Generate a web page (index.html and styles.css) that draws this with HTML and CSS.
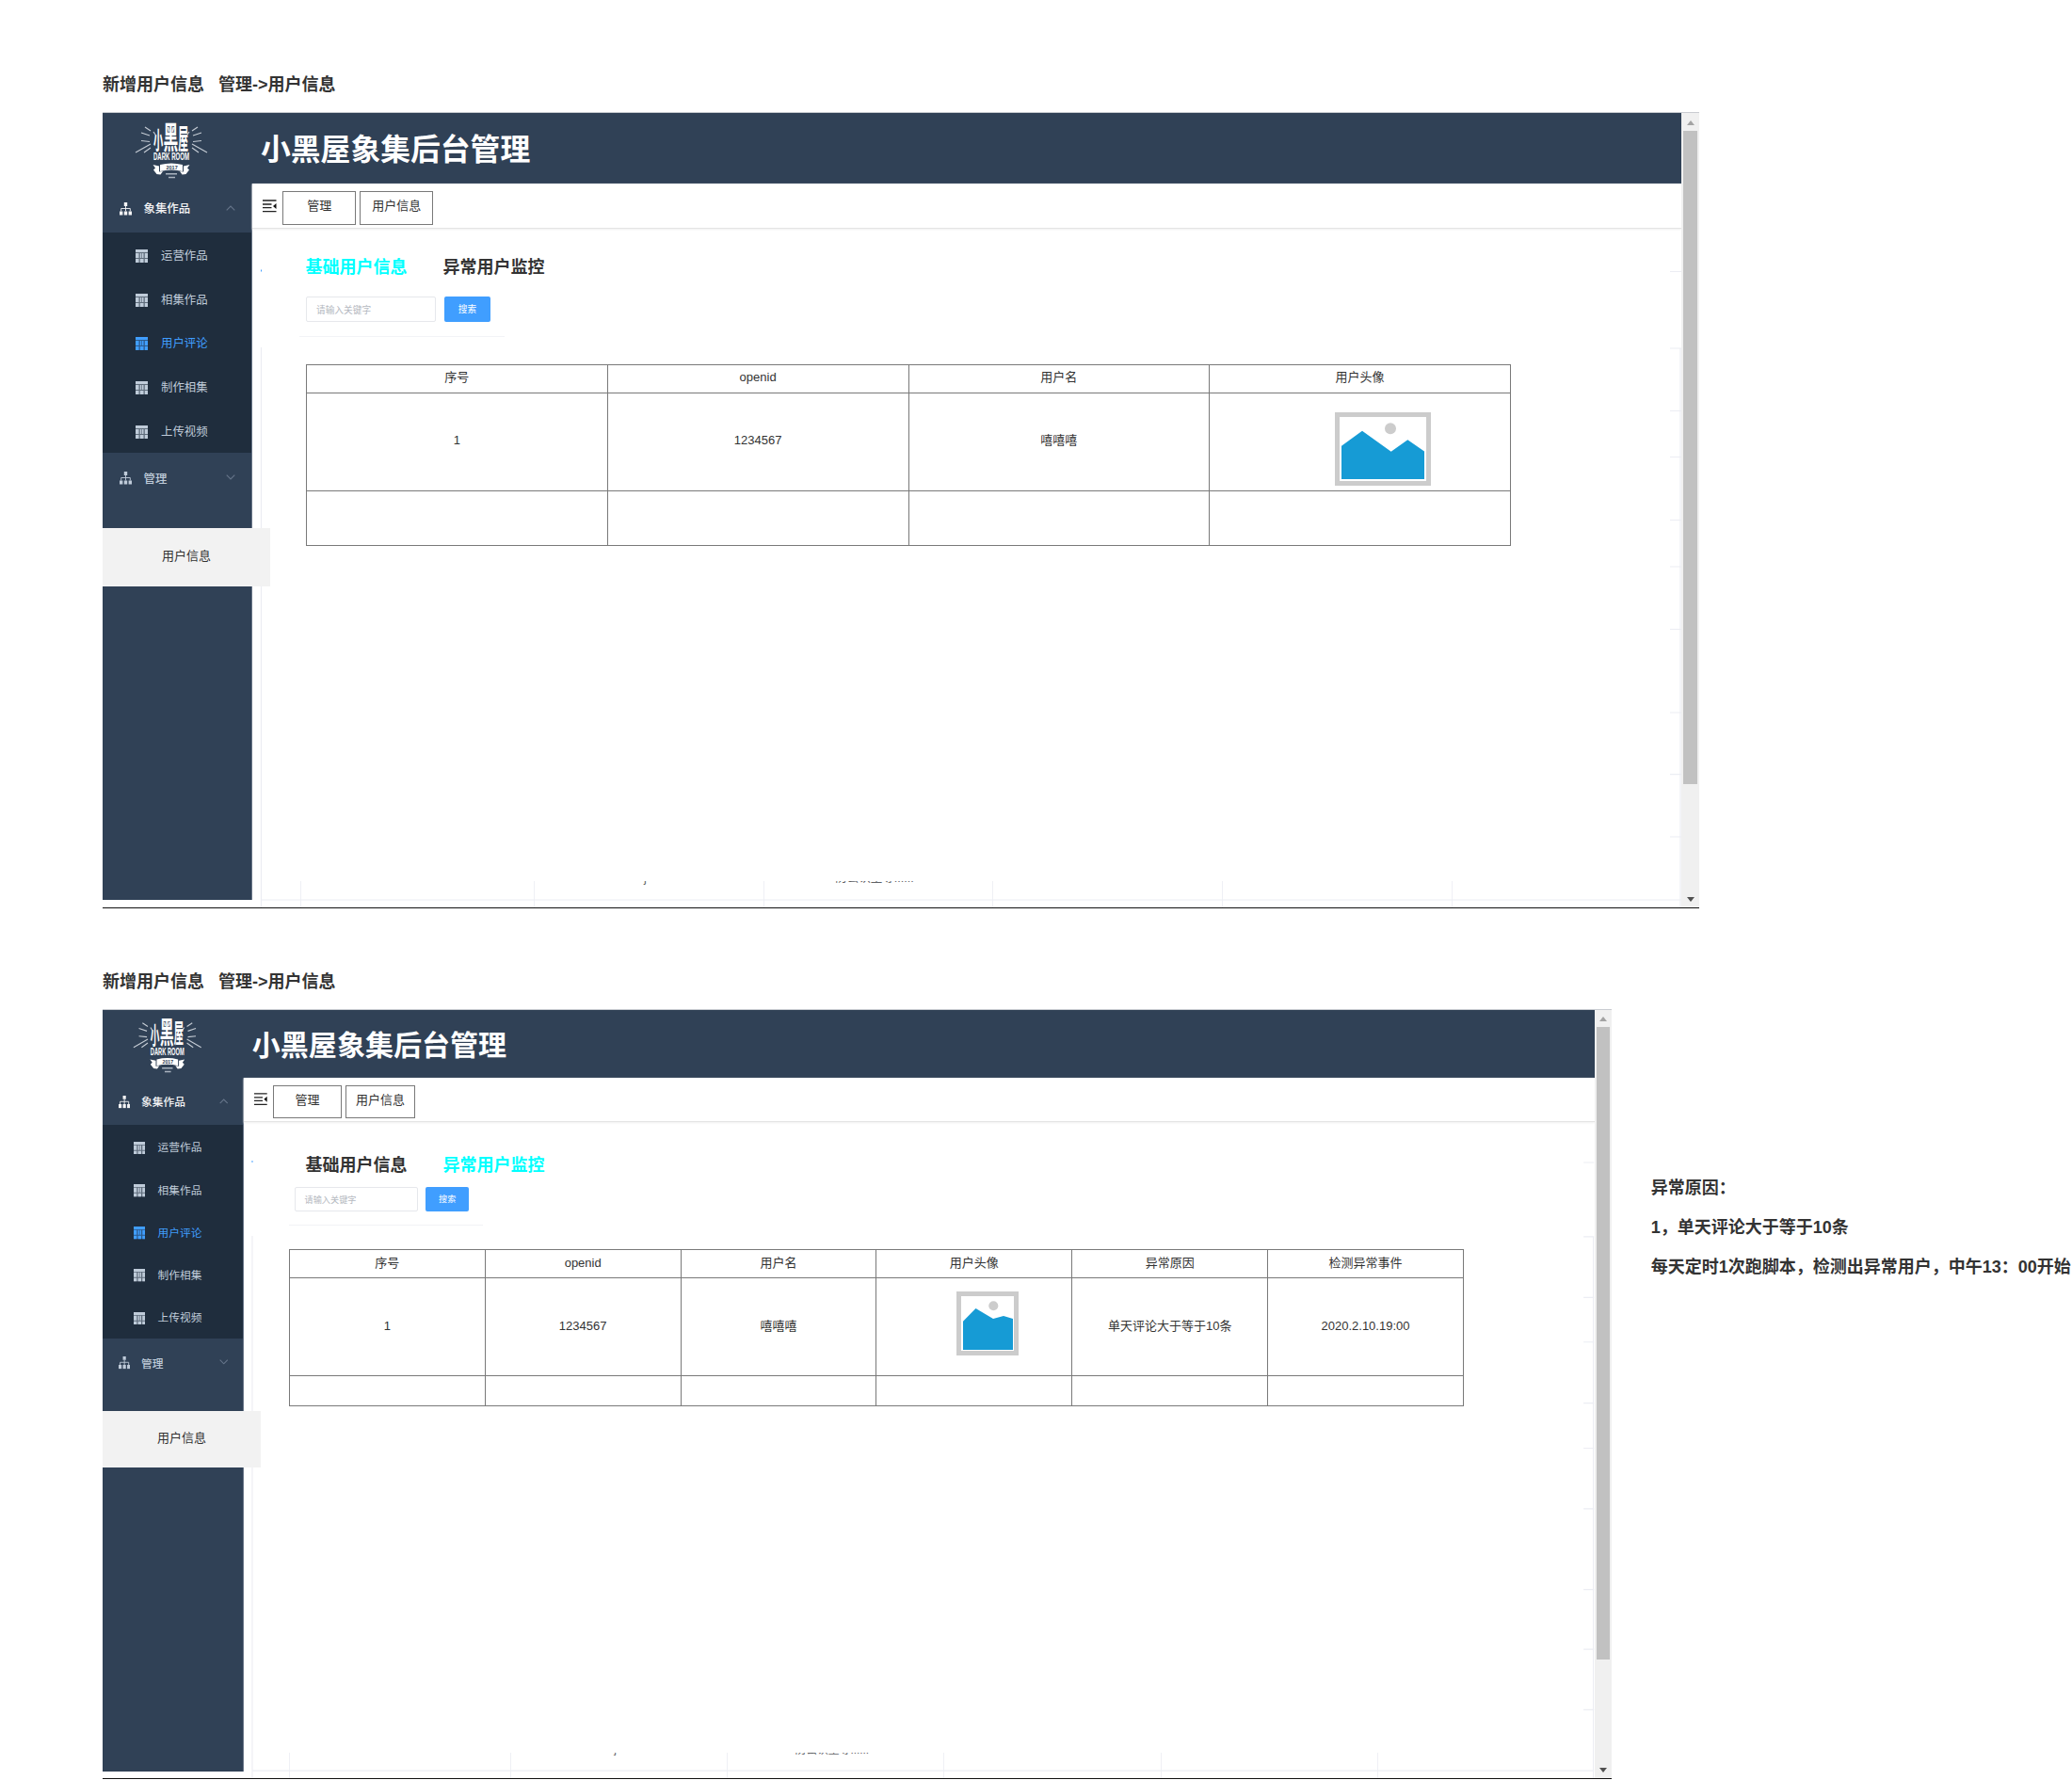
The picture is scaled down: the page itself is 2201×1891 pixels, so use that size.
FILE: index.html
```html
<!DOCTYPE html>
<html lang="zh-CN">
<head>
<meta charset="utf-8">
<title>小黑屋象集后台管理</title>
<link rel="stylesheet" href="styles.css">
</head>
<body>
<svg class="defs" aria-hidden="true">
  <symbol id="logo" viewBox="0 0 80 66" preserveAspectRatio="none">
    <g stroke="#c3cad3" stroke-width="1.2" fill="none">
      <path d="M2 37 18 28M11 37 18 32M8 24.500l9 1M8 16l9 3M12 10l6 4M21 15l2 3M78 37 62 28M69 37 62 32M72 24.500l-9 1M72 16l-9 3M68 10l-6 4M59 15l-2 3"/>
    </g>
    <g fill="#fff" font-family="'Noto Sans CJK SC',sans-serif" font-weight="700">
      <text transform="translate(21 33) scale(.6 1.5)" font-size="17">小</text>
      <text transform="translate(31.500 32.500) scale(.83 1.75)" font-size="19">黑</text>
      <text transform="translate(47.300 32.500) scale(.6 1.65)" font-size="18">屋</text>
      <text x="21" y="45.300" font-size="10.500" textLength="38" lengthAdjust="spacingAndGlyphs" font-family="'Liberation Sans',sans-serif">DARK ROOM</text>
    </g>
    <path fill="#fff" d="M28 50q12-3 24 0v7q-12-3-24 0zM20.500 50l6.500 1.500v6l4-.5-2.500 3.500-4-.5-3.500-4.500 2-2zM59.500 50l-6.500 1.500v6l-4-.5 2.500 3.500 4-.5 3.500-4.500-2-2z"/>
    <text x="34.500" y="55" font-size="5.500" font-weight="700" fill="#304156" font-family="'Liberation Sans',sans-serif">2017</text>
    <path stroke="#aab4c0" stroke-width="1.600" d="M34 59.700h12M37 63.500h7"/>
  </symbol>
  <symbol id="tree" viewBox="0 0 13 14" preserveAspectRatio="none">
    <path fill="currentColor" d="M4.800 0h3.400v4H4.800zM0 9.400h3.400v4.200H0zM4.800 9.400h3.400v4.200H4.800zM9.600 9.400H13v4.200H9.600z"/>
    <path fill="none" stroke="currentColor" stroke-width=".9" d="M6.500 4v5.400M1.700 9.400V6.500h9.600v2.900"/>
  </symbol>
  <symbol id="grid" viewBox="0 0 13 14" preserveAspectRatio="none">
    <path fill="currentColor" d="M0 0h13v3H0zM0 4h3.500v5H0zM4.800 4h1.500v5H4.800zM7 4h1.500v5H7zM9.800 4H13v5H9.800zM0 10h3.500v4H0zM4.800 10h3.700v4H4.800zM9.800 10H13v4H9.800z"/>
    <path fill="currentColor" opacity=".4" d="M0 2h13v12H0z"/>
  </symbol>
  <symbol id="up" viewBox="0 0 10 6"><path d="M.7 5.300 5 1l4.300 4.300" fill="none" stroke="#66758a" stroke-width="1.100"/></symbol>
  <symbol id="down" viewBox="0 0 10 6"><path d="M.7.700 5 5 9.300.700" fill="none" stroke="#66758a" stroke-width="1.100"/></symbol>
  <symbol id="fold" viewBox="0 0 15 14" preserveAspectRatio="none">
    <path stroke="#222" stroke-width="1.300" d="M0 1h14.500M0 5h9.500M0 8.600h9.500M0 12.700h14.500"/><path fill="#111" d="M14.500 4v6l-3.500-3z"/>
  </symbol>
  <symbol id="rules" viewBox="268 243 1518 721" preserveAspectRatio="none">
    <path fill="none" stroke="#ecedf3" stroke-width="1.200" d="M277.500 369v595M1785 370v594M1774 288.500h12M1774 370h12M1774 436.500h12M1774 485.500h12M1774 552.500h12M1774 602h12M1774 668.500h12M1774 757h12M1774 822.700h12M1774 889h12M277 956h1509"/>
    <path fill="#409eff" d="M277 286.500h1v2h-1z"/>
  </symbol>
</svg>

<section class="board board--basic">
  <h2 class="board__title">新增用户信息&nbsp;&nbsp; 管理-&gt;用户信息</h2>
  <div class="board__row">
    <div class="shell">
      <div class="view">
        <header class="head"><svg class="head__logo"><use href="#logo"/></svg><h1 class="head__name">小黑屋象集后台管理</h1></header>
        <div class="body">
          <nav class="side">
            <div class="group group--open"><svg class="icon"><use href="#tree"/></svg><span>象集作品</span><svg class="chevron"><use href="#up"/></svg></div>
            <ul class="submenu">
              <li><svg class="icon"><use href="#grid"/></svg>运营作品</li>
              <li><svg class="icon"><use href="#grid"/></svg>相集作品</li>
              <li class="is-active"><svg class="icon"><use href="#grid"/></svg>用户评论</li>
              <li><svg class="icon"><use href="#grid"/></svg>制作相集</li>
              <li><svg class="icon"><use href="#grid"/></svg>上传视频</li>
            </ul>
            <div class="group"><svg class="icon"><use href="#tree"/></svg><span>管理</span><svg class="chevron"><use href="#down"/></svg></div>
            <div class="entry">用户信息</div>
          </nav>
          <main class="main">
            <svg class="rules"><use href="#rules"/></svg>
            <div class="crumbs"><svg class="fold"><use href="#fold"/></svg><span class="crumb">管理</span><span class="crumb">用户信息</span></div>
            <div class="tabs"><span class="is-current">基础用户信息</span><span>异常用户监控</span></div>
            <div class="search"><span class="search__input">请输入关键字</span><span class="search__button">搜索</span></div>
            <div class="divider"></div>
            <table class="table">
              <tr class="table__head"><th>序号</th><th>openid</th><th>用户名</th><th>用户头像</th></tr>
              <tr class="table__data"><td>1</td><td>1234567</td><td>嘻嘻嘻</td><td class="photo"><svg class="avatar" viewBox="0 0 102 78">
                <path fill="#fff" stroke="#ccc" stroke-width="5" d="M2.500 2.500h97v73h-97z"/><circle cx="59" cy="17.300" r="6" fill="#ccc"/>
                <path fill="#169bd5" d="M7 35.700 29 19.700 59.700 41.700 77.300 29.300 95 41.500V71H7z"/></svg></td></tr>
              <tr class="table__blank"><td></td><td></td><td></td><td></td></tr>
            </table>
            <div class="residue"><span></span><span><i>j</i></span><span><i>防公认至等......</i></span><span></span><span></span><span></span></div>
          </main>
        </div>
      </div>
      <div class="scroll"><i class="scroll__up"></i><i class="scroll__thumb"></i><i class="scroll__down"></i></div>
    </div>
  </div>
</section>

<section class="board board--abnormal">
  <h2 class="board__title">新增用户信息&nbsp;&nbsp; 管理-&gt;用户信息</h2>
  <div class="board__row">
    <div class="shell">
      <div class="view">
        <header class="head"><svg class="head__logo"><use href="#logo"/></svg><h1 class="head__name">小黑屋象集后台管理</h1></header>
        <div class="body">
          <nav class="side">
            <div class="group group--open"><svg class="icon"><use href="#tree"/></svg><span>象集作品</span><svg class="chevron"><use href="#up"/></svg></div>
            <ul class="submenu">
              <li><svg class="icon"><use href="#grid"/></svg>运营作品</li>
              <li><svg class="icon"><use href="#grid"/></svg>相集作品</li>
              <li class="is-active"><svg class="icon"><use href="#grid"/></svg>用户评论</li>
              <li><svg class="icon"><use href="#grid"/></svg>制作相集</li>
              <li><svg class="icon"><use href="#grid"/></svg>上传视频</li>
            </ul>
            <div class="group"><svg class="icon"><use href="#tree"/></svg><span>管理</span><svg class="chevron"><use href="#down"/></svg></div>
            <div class="entry">用户信息</div>
          </nav>
          <main class="main">
            <svg class="rules"><use href="#rules"/></svg>
            <div class="crumbs"><svg class="fold"><use href="#fold"/></svg><span class="crumb">管理</span><span class="crumb">用户信息</span></div>
            <div class="tabs"><span>基础用户信息</span><span class="is-current">异常用户监控</span></div>
            <div class="search"><span class="search__input">请输入关键字</span><span class="search__button">搜索</span></div>
            <div class="divider"></div>
            <table class="table">
              <tr class="table__head"><th>序号</th><th>openid</th><th>用户名</th><th>用户头像</th><th>异常原因</th><th>检测异常事件</th></tr>
              <tr class="table__data"><td>1</td><td>1234567</td><td>嘻嘻嘻</td><td class="photo"><svg class="avatar" viewBox="0 0 66 68">
                <path fill="#fff" stroke="#ccc" stroke-width="5" d="M2.500 2.500h61v63h-61z"/><circle cx="39.300" cy="15.200" r="5" fill="#ccc"/>
                <path fill="#169bd5" d="M7 31.700 20.500 18 39 29 50 26 60 29V62H7z"/></svg></td><td>单天评论大于等于10条</td><td>2020.2.10.19:00</td></tr>
              <tr class="table__blank"><td></td><td></td><td></td><td></td><td></td><td></td></tr>
            </table>
            <div class="residue"><span></span><span><i>j</i></span><span><i>防公认至等......</i></span><span></span><span></span><span></span></div>
          </main>
        </div>
      </div>
      <div class="scroll"><i class="scroll__up"></i><i class="scroll__thumb"></i><i class="scroll__down"></i></div>
    </div>
    <aside class="note"><p>异常原因：</p><p>1，单天评论大于等于10条</p><p>每天定时1次跑脚本，检测出异常用户，中午13：00开始</p></aside>
  </div>
</section>
</body>
</html>
```

FILE: styles.css
```css
* { box-sizing: border-box; }
body {
  margin: 0;
  height: 1891px;
  overflow: hidden;
  background: #fff;
  color: #333;
  font: 13px/20px "Liberation Sans", "Noto Sans CJK SC", sans-serif;
}
h1, h2, p, ul { margin: 0; padding: 0; }
i { font-style: normal; }
svg { display: block; flex: none; }
.defs { position: absolute; width: 0; height: 0; }

/* --x and --y are the unit sizes of a mockup frame on each axis */
.board { padding-left: 109px; }
.board--basic {
  --x: 1px; --y: 1px;
  --tabs-top: 28px; --tabs-shift: 56.500px; --search-top: 16.500px;
  --table-top: 30px; --table-left: 57px; --table-width: 1280px; --blank: 58px;
  padding-top: 77px;
}
.board--abnormal {
  --x: .945px; --y: .968px;
  --tabs-top: 33px; --tabs-shift: 65.300px; --search-top: 9px;
  --table-top: 26px; --table-left: 47.700px; --table-width: 1248px; --blank: 32px;
  padding-top: 65px;
}
.board__title { font-size: 18px; line-height: 27px; white-space: pre; margin-bottom: 15px; }
.board__row { display: flex; }

.shell {
  display: flex;
  flex: none;
  width: calc(1696 * var(--x));
  height: calc(845.500 * var(--y));
  border-top: 1px solid #c9ccd1;
  border-bottom: 1px solid #111;
}
.view { display: flex; flex-direction: column; width: calc(1677 * var(--x)); }
.head {
  display: flex;
  align-items: center;
  flex: none;
  height: calc(75 * var(--y));
  background: #304156;
}
.head__logo { width: calc(80 * var(--x)); height: calc(66 * var(--y)); margin-left: calc(33 * var(--x)); }
.head__name {
  margin-left: calc(55 * var(--x));
  padding-top: 4px;
  color: #fff;
  font-size: calc(31.800 * var(--x));
  line-height: 1.200;
  white-space: nowrap;
}
.body { display: flex; flex: 1; min-height: 0; }
.side {
  flex: none;
  width: calc(159 * var(--x));
  height: calc(761 * var(--y));
  background: #304156;
  border-right: 1px solid #687587;
  color: #bfcbd9;
  font-size: calc(12.400 * var(--x));
}
.icon { width: calc(13 * var(--x)); height: calc(14 * var(--y)); }
.group {
  display: flex;
  align-items: center;
  height: calc(53 * var(--y));
  padding: 1px calc(17 * var(--x)) 0 calc(17.500 * var(--x));
  gap: calc(13 * var(--x));
}
.group--open { height: calc(52 * var(--y)); color: #f4f4f5; }
.group span { font-weight: 500; padding-top: 1px; }
.chevron { width: calc(10 * var(--x)); height: calc(6 * var(--y)); margin: -2px 0 0 auto; }
.submenu {
  height: calc(234 * var(--y));
  padding-top: calc(1.500 * var(--y));
  list-style: none;
  background: #1f2d3d;
}
.submenu li {
  display: flex;
  align-items: center;
  height: calc(46.750 * var(--y));
  padding-left: calc(35 * var(--x));
  gap: calc(14 * var(--x));
}
.submenu .is-active { color: #409eff; }
.entry {
  position: relative;
  z-index: 1;
  width: calc(178 * var(--x));
  height: calc(62 * var(--y));
  margin-top: calc(26.500 * var(--y));
  line-height: calc(59.500 * var(--y));
  background: #f2f2f2;
  color: #333;
  font-size: 13px;
  text-align: center;
}

.main { position: relative; display: flex; flex-direction: column; flex: 1; min-width: 0; }
.rules {
  position: absolute;
  left: 0;
  bottom: 0;
  width: 100%;
  height: calc(721 * var(--y));
}
.crumbs {
  display: flex;
  flex: none;
  height: calc(48 * var(--y));
  padding: calc(8 * var(--y)) 0 0 calc(11 * var(--x));
  border-bottom: 1px solid #e4e4e4;
  box-shadow: 0 1px 2px #f0f0f0;
}
.fold { width: calc(15 * var(--x)); height: calc(14 * var(--y)); margin: calc(8.500 * var(--y)) calc(6.300 * var(--x)) 0 0; }
.crumb {
  width: calc(78 * var(--x));
  height: calc(36 * var(--y));
  margin-right: calc(4 * var(--x));
  border: 1px solid #797979;
  line-height: calc(30 * var(--y));
  text-align: center;
}
.tabs {
  display: flex;
  gap: 38px;
  margin: var(--tabs-top) 0 0 var(--tabs-shift);
  font-size: 18px;
  font-weight: 700;
  line-height: 27px;
}
.tabs .is-current { color: #0ff; }
.search {
  display: flex;
  gap: calc(9 * var(--x));
  margin: var(--search-top) 0 0 calc(57 * var(--x));
  font-size: calc(9.700 * var(--x));
  line-height: calc(27 * var(--y));
}
.search__input {
  width: calc(138 * var(--x));
  height: calc(27.500 * var(--y));
  padding-left: calc(10 * var(--x));
  border: 1px solid #e6e8ec;
  border-radius: 2px;
  color: #b4b8c0;
}
.search__button {
  width: calc(49 * var(--x));
  height: calc(27.500 * var(--y));
  border-radius: 2px;
  background: #409eff;
  color: #fff;
  line-height: calc(28.500 * var(--y));
  text-align: center;
}
.divider {
  width: calc(218 * var(--x));
  height: 1px;
  margin: calc(14.500 * var(--y)) 0 0 calc(50 * var(--x));
  background: #f2f3f6;
}
.table {
  flex: none;
  width: var(--table-width);
  margin: calc(var(--table-top) - 1px) 0 0 var(--table-left);
  border-collapse: collapse;
  table-layout: fixed;
  text-align: center;
}
.table th, .table td { padding: 0; border: 1px solid #797979; font-weight: 400; }
.table th { padding-bottom: 2px; }
.table td { padding-bottom: 2px; }
.table__head { height: 30px; }
.table__data { height: 104px; }
.table__blank { height: var(--blank); }
.table .photo { vertical-align: top; }
.avatar { width: 102px; height: 78px; margin: 20px 0 0 133px; }
.board--abnormal .avatar { width: 66px; height: 68px; margin: 14px 0 0 85px; }

.residue {
  display: flex;
  height: calc(27.500 * var(--y));
  margin: auto 0 0 calc(51 * var(--x));
  color: #606266;
  font-size: calc(12.500 * var(--x));
  line-height: 16px;
  text-align: center;
}
.residue span {
  flex: none;
  width: calc(243.700 * var(--x));
  overflow: hidden;
  border-left: 1px solid #eff0f5;
}
.residue span:first-child { width: calc(248 * var(--x)); }
.residue span:last-child { flex: 1; }
.residue i { display: block; margin: -11px 8px 0 0; }

.scroll {
  display: flex;
  flex-direction: column;
  align-items: center;
  flex: 1;
  background: #f0f0f0;
}
.scroll__up {
  margin-top: calc(8 * var(--y));
  border: 4px solid transparent;
  border-top: 0;
  border-bottom: 5px solid #a3a3a3;
}
.scroll__thumb {
  width: calc(15 * var(--x));
  height: calc(694 * var(--y));
  margin-top: calc(6 * var(--y));
  background: #c1c1c1;
}
.scroll__down {
  margin: auto 0 calc(6 * var(--y));
  border: 4px solid transparent;
  border-bottom: 0;
  border-top: 5px solid #505050;
}

.note {
  margin: 169px 0 0 42px;
  font-size: 18px;
  font-weight: 700;
  line-height: 42px;
  white-space: nowrap;
}
```
